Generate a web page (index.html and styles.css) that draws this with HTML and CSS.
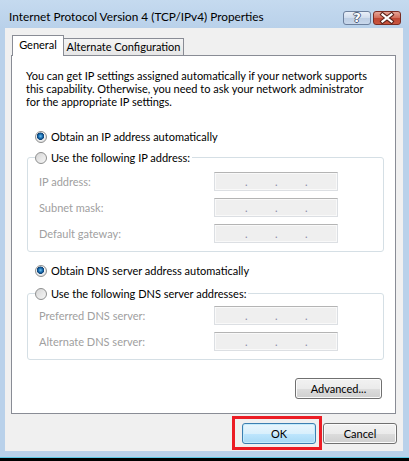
FILE: index.html
```html
<html>
<head>
	<title>Internet Protocol Version 4 (TCP/IPv4) Properties</title>
	<link rel="stylesheet" href="styles.css">
</head>
<body>
	<div class="window">
		<div class="titlebar">
			<span class="title">Internet Protocol Version 4 (TCP/IPv4) Properties</span>
			<div class="caption-buttons">
				<span class="cap-btn help">?</span>
				<span class="cap-btn close">
					<svg width="26" height="12" viewBox="0 0 26 12">
						<path d="M8.5 2.5 L17.5 9.5 M17.5 2.5 L8.5 9.5" stroke="#5b231b" stroke-width="4.2" stroke-linecap="square"/>
						<path d="M8.5 2.5 L17.5 9.5 M17.5 2.5 L8.5 9.5" stroke="#fff" stroke-width="2.2" stroke-linecap="square"/>
					</svg>
				</span>
			</div>
		</div>
		<div class="client">
			<div class="tabs">
				<div class="tab active">General</div>
				<div class="tab alt">Alternate Configuration</div>
			</div>
			<div class="panel">
				<p class="intro">You can get IP settings assigned automatically if your network supports<br>this capability. Otherwise, you need to ask your network administrator<br>for the appropriate IP settings.</p>

				<div class="option"><span class="radio checked"></span>Obtain an IP address automatically</div>
				<fieldset class="group">
					<legend class="option"><span class="radio"></span>Use the following IP address:</legend>
					<div class="field"><span class="label">IP address:</span><span class="ipbox"><i>.</i><i>.</i><i>.</i></span></div>
					<div class="field"><span class="label">Subnet mask:</span><span class="ipbox"><i>.</i><i>.</i><i>.</i></span></div>
					<div class="field"><span class="label">Default gateway:</span><span class="ipbox"><i>.</i><i>.</i><i>.</i></span></div>
				</fieldset>

				<div class="option dns-auto"><span class="radio checked"></span>Obtain DNS server address automatically</div>
				<fieldset class="group dns">
					<legend class="option"><span class="radio"></span>Use the following DNS server addresses:</legend>
					<div class="field"><span class="label">Preferred DNS server:</span><span class="ipbox"><i>.</i><i>.</i><i>.</i></span></div>
					<div class="field"><span class="label">Alternate DNS server:</span><span class="ipbox"><i>.</i><i>.</i><i>.</i></span></div>
				</fieldset>

				<div class="advanced-row">
					<button type="button" class="btn advanced">Advanced...</button>
				</div>
			</div>
			<div class="dialog-buttons">
				<button type="button" class="btn default">OK</button>
				<button type="button" class="btn">Cancel</button>
			</div>
		</div>
		<div class="highlight"></div>
	</div>
</body>
</html>
```
FILE: styles.css
```css
body { margin: 0; background: #000; font: 11px "Lato", "Liberation Sans", sans-serif; color: #000; }

.window { position: relative; width: 409px; height: 458px; box-sizing: border-box; background: #b9d1ea; border-bottom: 1px solid #5bc8e4; }

/* title bar */
.titlebar { height: 28px; display: flex; align-items: flex-start; padding-left: 9px; background: linear-gradient(#c5daef, #b9d1ea); }
.title { font-size: 11.8px; line-height: 16px; padding-top: 9px; white-space: nowrap; }
.caption-buttons { display: flex; gap: 2px; margin: 11px 8px 0 auto; }
.cap-btn { width: 28px; height: 14px; box-sizing: border-box; border: 1px solid #6c7f9c; border-radius: 3px; display: flex; align-items: center; justify-content: center; }
.help { background: linear-gradient(#e9eff8, #d0dcec 50%, #bccde3 51%, #c9d8ec); color: #fff; font: bold 13px "DejaVu Sans", sans-serif; line-height: 12px; text-shadow: -1px 0 #50607a, 1px 0 #50607a, 0 -1px #50607a, 0 1px #50607a; }
.close { border-color: #7a2c22; background: linear-gradient(#e7a597, #d16b58 50%, #bf4633 51%, #c9563f); }

/* client area */
.client { margin: 0 6px 0 5px; height: 423px; background: #f0f0f0; }

.tabs { height: 27px; display: flex; align-items: flex-end; padding-left: 7px; }
.tab { box-sizing: border-box; border: 1px solid #898c95; border-bottom: 0; text-align: center; white-space: nowrap; }
.tab.active { width: 52px; height: 21px; line-height: 18px; margin-bottom: -1px; position: relative; z-index: 1; background: #fff; }
.tab.alt { width: 121px; height: 17px; line-height: 15px; margin-left: -1px; background: linear-gradient(#f4f4f4, #e6e6e6); }

.panel { margin-left: 6px; width: 385px; height: 359px; box-sizing: border-box; border: 1px solid #898c95; background: #fff; }

.intro { margin: 13px 0 0 14px; line-height: 13px; white-space: nowrap; }

.option { display: flex; align-items: center; gap: 4px; height: 14px; line-height: 14px; white-space: nowrap; }
.panel > .option { margin: 22px 0 0 23px; }
.panel > .option.dns-auto { margin-top: 12px; }

.radio { width: 12px; height: 12px; box-sizing: border-box; border-radius: 50%; border: 1px solid #8e8f8f; background: linear-gradient(135deg, #d6d6d6, #f6f6f6); flex: none; }
.radio.checked { background: radial-gradient(circle at 45% 42%, #6fc2f0 0, #1b6fb2 2px, #0b3f73 3.4px, #f8f8f8 4px, #e4e4e4 5px); }

.group { width: 357px; box-sizing: border-box; margin: 7px 0 0 15px; padding: 8px 0 8px 0; border: 1px solid #d5dfe5; border-radius: 3px; min-inline-size: 0; }
.group.dns { margin-top: 9px; padding-top: 6px; }
.group legend { height: 13px; line-height: 13px; padding: 0 2px 0 0; margin-left: 7px; }

.field { display: grid; grid-template-columns: 175px 124px; align-items: center; height: 19px; padding-left: 11px; }
.field + .field { margin-top: 7px; }
.label { color: #a0a0a0; white-space: nowrap; }

.ipbox { display: flex; align-items: center; gap: 28px; height: 19px; box-sizing: border-box; padding-left: 30px; border: 1px solid #dcdfe3; border-top-color: #b4b4b4; background: #efefef; box-shadow: inset 0 0 0 1px #f9f9f9; color: #8a88a8; line-height: 17px; }
.ipbox i { font-style: normal; width: 2px; }

.advanced-row { display: flex; justify-content: flex-end; margin: 18px 13px 0 0; }

/* buttons */
.btn { height: 21px; padding: 0; font: inherit; color: #000; border: 1px solid #707070; border-radius: 3px; background: linear-gradient(#f2f2f2, #ebebeb 50%, #dddddd 51%, #cfcfcf); box-shadow: inset 0 0 0 1px #fbfbfb; }
.btn.advanced { width: 87px; }
.btn.default { border-color: #3c7fb1; background: linear-gradient(#eaf6fd, #d9f0fc 50%, #bee6fd 51%, #a7d9f5); box-shadow: inset 0 0 0 1px #c5ecfc; }

.dialog-buttons { display: flex; justify-content: flex-end; gap: 7px; margin: 9px 6px 0 0; }
.dialog-buttons .btn { width: 74px; }

/* annotation box around OK */
.highlight { position: absolute; left: 232px; top: 416px; width: 90px; height: 34px; box-sizing: border-box; border: 3px solid #ec1c24; }
```
